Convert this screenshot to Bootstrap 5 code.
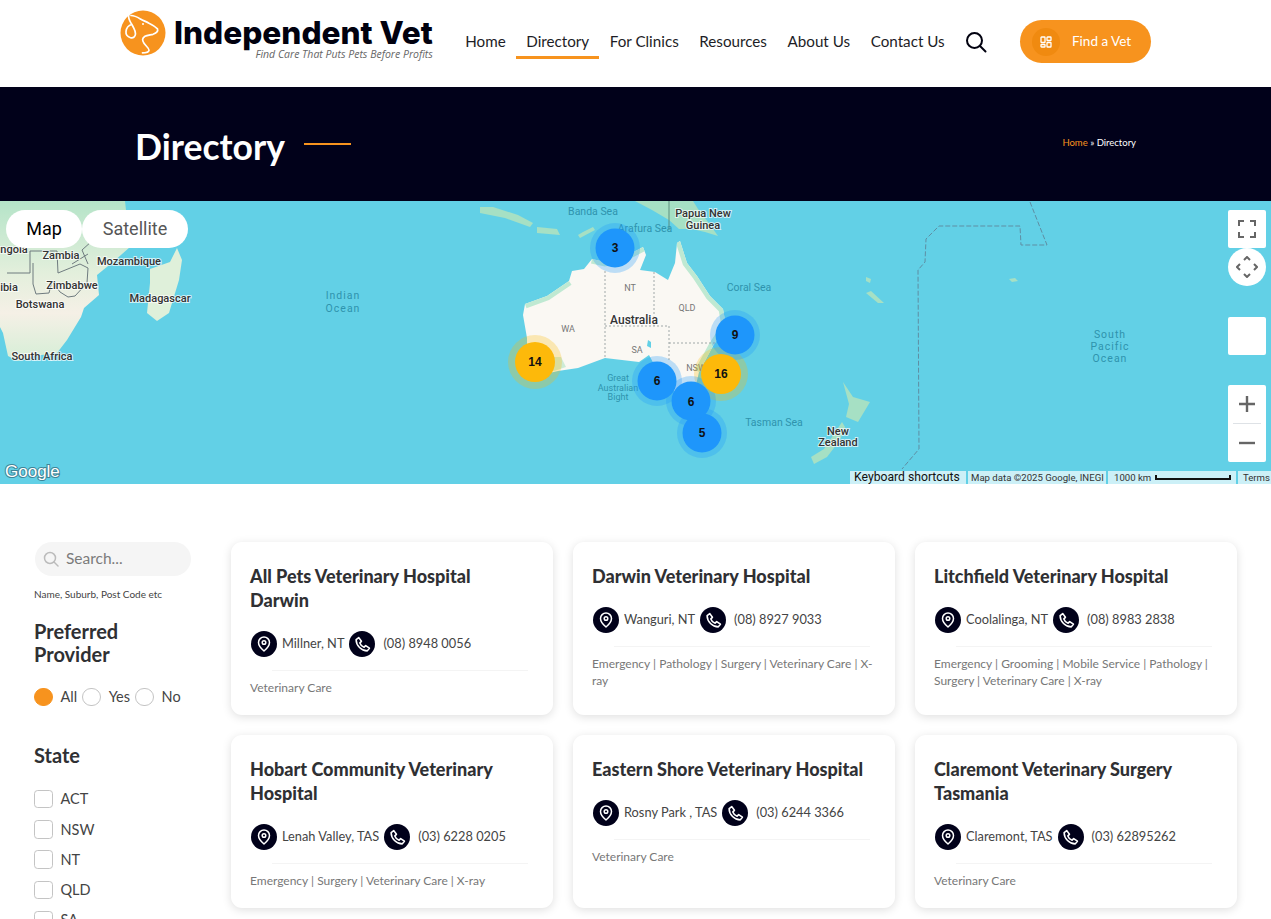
<!DOCTYPE html>
<html lang="en">
<head>
<meta charset="UTF-8">
<title>Directory - Independent Vet</title>
<link href="https://cdn.jsdelivr.net/npm/bootstrap@5.3.0/dist/css/bootstrap.min.css" rel="stylesheet">
<style>
html, body { height: 100vh; overflow: hidden; }
body { font-family: Lato, "Noto Sans", sans-serif; color: #2f3033; background: #fff; }

.site-head { height: 87px; }
.head-inner { width: 1031px; margin-left: 120px; }
.logo-box { padding-top: 10px; }
.logo-text { margin-left: 8px; padding-top: 8px; }
.logo-word { font-family: Inter, "Liberation Sans", sans-serif; font-weight: 800; font-size: 31.600px; line-height: 30px; color: #01010f; white-space: nowrap; }
.logo-tag { font-family: "Open Sans", sans-serif; font-style: italic; font-size: 10.500px; line-height: 12px; color: #666; text-align: right; white-space: nowrap; }
.main-nav { margin-left: 22px; }
.main-nav a { color: #1d1d26; text-decoration: none; font-size: 15.200px; padding: 0 10.300px; height: 59px; line-height: 82px; display: block; border-bottom: 3px solid transparent; white-space: nowrap; }
.main-nav a.on { border-bottom-color: #f7931e; }
.nav-search { margin: 30px 0 0 9px; }
.find-btn { width: 131px; height: 43px; margin-top: 20px; border-radius: 22px; background: #f7931e; color: #fff; font-size: 13.500px; padding-left: 12px; text-decoration: none; }
.find-dot { width: 28px; height: 28px; border-radius: 50%; background: #f08a10; margin-right: 12px; }

.page-band { height: 114px; background: #01011a; color: #fff; padding: 7px 135px 0; }
.page-band h1 { font-size: 35.500px; font-weight: 700; margin: 0; }
.band-line { width: 47px; height: 2px; background: #f7931e; margin-left: 19px; margin-bottom: 8px; }
.crumbs { font-size: 9.500px; margin-bottom: 8px; }
.crumbs span { color: #f7931e; }

.map-box { height: 283px; background: #62d0e6; overflow: hidden; }
.map-box svg { display: block; }
.map-pill { position: absolute; top: 9px; height: 38px; border-radius: 19px; background: #fff; font-family: Roboto, sans-serif; font-size: 18px; line-height: 38px; text-align: center; }
.pill-map { left: 6px; width: 76px; color: #000; }
.pill-sat { left: 82px; width: 106px; color: #565656; }
.map-ctrl { position: absolute; left: 1228px; width: 38px; background: #fff; border-radius: 2px; }
.ctrl-full { top: 9px; height: 38px; }
.ctrl-pan { top: 47px; height: 38px; border-radius: 50%; }
.ctrl-blank { top: 116px; height: 38px; }
.ctrl-zoom { top: 184px; height: 77px; }
.attrib { position: absolute; right: 0; bottom: 0; height: 13px; font-family: Roboto, sans-serif; font-size: 9.600px; line-height: 13px; color: #333; gap: 2px; }
.attrib > div { background: rgba(255,255,255,.68); padding: 0 3px; white-space: nowrap; }
.attrib .keys { width: 116px; font-size: 12.200px; color: #111; padding: 0 4px; }
.attrib .data-note { width: 138px; }
.attrib .scale-note { width: 128px; padding-left: 6px; }
.attrib .terms-note { width: 33px; padding-left: 5px; }
.scale-bar { width: 76px; height: 5px; border: 2px solid #111; border-top: 0; margin: 4px 0 0 4px; }

.list-area { padding: 58px 34px 0; gap: 40px; }
.side-col { width: 157px; flex: none; }
.search-pill { height: 34px; border-radius: 17px; background: #f5f5f5; padding: 0 8px; margin-left: 1px; }
.search-pill input { border: 0; background: transparent; outline: 0; width: 115px; font-size: 15.500px; color: #777; padding: 0; margin-left: 7px; }
.search-pill input::placeholder { color: #7b7b7b; opacity: 1; }
.hint-text { font-size: 10px; line-height: 12px; color: #444; margin: 12px 0 20px; }
.side-title { font-size: 20px; line-height: 23px; font-weight: 700; color: #2f3033; margin: 0; }
.radio-row { margin: 21px 0 37px; font-size: 14.500px; color: #444; height: 20px; }
.radio-row label { margin: 0 5px 0 8px; }
.side-col .form-check-input { width: 18.500px; height: 18.500px; margin: 0; border: 1.5px solid #c4c4c4; box-shadow: none; flex: none; }
.side-col .form-check-input:checked { background-color: #f7931e; border-color: #f7931e; background-image: none; }
.check-list { margin-top: 17px; }
.check-row { height: 30.300px; font-size: 14.500px; color: #444; }
.check-row label { margin-left: 8px; }

.card-grid { --bs-gutter-x: 20px; --bs-gutter-y: 20px; flex: 1; margin: -20px -10px 0; align-content: flex-start; }
.vet-card { height: 173px; border: 0; border-radius: 11px; box-shadow: 0 2px 10px rgba(0,0,0,.13); padding: 22px 19px 0; }
.vet-name { font-size: 18px; line-height: 24px; font-weight: 900; color: #2f3033; margin: 0 0 18px; padding-right: 8px; }
.vet-info { font-size: 12.800px; color: #444; height: 28px; white-space: nowrap; margin-bottom: 12px; }
.round-icon { width: 26px; height: 26px; border-radius: 50%; background: #01011a; flex: none; }
.pin-round { margin: 0 5px 0 1px; }
.phone-round { margin: 0 8px 0 5px; }
.vet-rule { height: 1px; background: #f4f4f4; margin: 0 6px 9px 22px; }
.vet-tags { font-size: 12px; line-height: 16.500px; color: #777; margin: 0; }
</style>
</head>
<body>

<header class="site-head bg-white">
  <div class="head-inner d-flex align-items-start">
    <div class="logo-box d-flex">
      <svg width="46" height="46" viewBox="0 0 46 46" fill="none" stroke="#fff" stroke-width="1.700" stroke-linecap="round" stroke-linejoin="round">
        <circle cx="23" cy="23" r="22.500" fill="#f7931e" stroke="none"/>
        <path d="M11 5.500c4 0 7 2 10 3.800 2 1.200 5 2.200 8 4 3 1.500 6 3 8.500 5.500 1 2.500-1.500 4.500-4.500 5.500-3 .7-6 .8-8 2-3 2-3 4-1 7 2 3 5 4.500 5 7-.5 2.500-4 2.500-6.500 2.500"/>
        <path d="M8.700 5.300c-1 3.500 2 7 4 10.700 1.500 3 3 5 2.800 8-.3 3-2.500 4.500-5 3.700-2.800-.8-4.800-3-4.500-6 .3-3.500 2.800-6.500 6-7.400"/>
        <circle cx="23" cy="14" r="1" fill="#fff" stroke="none"/>
      </svg>
      <div class="logo-text">
        <div class="logo-word">Independent Vet</div>
        <div class="logo-tag">Find Care That Puts Pets Before Profits</div>
      </div>
    </div>
    <nav class="main-nav d-flex">
      <a href="#">Home</a>
      <a href="#" class="on">Directory</a>
      <a href="#">For Clinics</a>
      <a href="#">Resources</a>
      <a href="#">About Us</a>
      <a href="#">Contact Us</a>
    </nav>
    <svg class="nav-search" width="24" height="24" viewBox="0 0 24 24" fill="none" stroke="#01010f" stroke-width="2" stroke-linecap="round">
      <circle cx="10.500" cy="10.500" r="7.500"/><path d="M16 16l5.500 5.500"/>
    </svg>
    <a href="#" class="find-btn d-flex align-items-center ms-auto">
      <span class="find-dot d-flex align-items-center justify-content-center">
        <svg width="12" height="12" viewBox="0 0 12 12" fill="none" stroke="#fff" stroke-width="1.300"><rect x="1" y="1" width="4" height="5.500" rx=".6"/><rect x="7" y="1" width="4" height="3.500" rx=".6"/><rect x="1" y="8.500" width="4" height="2.500" rx=".6"/><rect x="7" y="6.500" width="4" height="4.500" rx=".6"/></svg>
      </span>
      <span>Find a Vet</span>
    </a>
  </div>
</header>

<section class="page-band d-flex align-items-center">
  <h1>Directory</h1>
  <div class="band-line"></div>
  <div class="crumbs ms-auto"><span>Home</span> » Directory</div>
</section>

<section class="map-box position-relative">
  <svg width="1271" height="283" viewBox="0 0 1271 283">
    <defs>
      <filter id="soft"><feGaussianBlur stdDeviation=".7"/></filter>
      <linearGradient id="africaLand" x1="0" y1="0" x2="0" y2="1">
        <stop offset="0" stop-color="#b5e4c8"/><stop offset=".45" stop-color="#e3efdc"/><stop offset=".7" stop-color="#f5f0e6"/><stop offset="1" stop-color="#d5eed6"/>
      </linearGradient>
      <clipPath id="ausLand"><path d="M523 114l2-11 22-8 22-15 3-10 12-2 8-10 13 3 15-3 23-12 3 8-6 15 15 2 13 8 7-17 2-20 3-2 7 22 10 13 13 20 13 13 3 17-13 20-7 13-7 13-3 13-17 10-13-10-10-17-7-13-10 7-17-2-17-2-27 10-20 3-13 3-18-13v-23z"/></clipPath>
    </defs>
    <g filter="url(#soft)">
      <path d="M0 0H125l5 46-17 15-16 13 2 20-15 13-3 9-14 23-10 13-23 3-16 5-10-5-5-23-5-10H0z" fill="url(#africaLand)"/>
      <path d="M177 47l5 12-3 20-10 33-12 8-10-8 3-30v-14l20-7z" fill="#dff0da"/>
      <path d="M523 114l2-11 22-8 22-15 3-10 12-2 8-10 13 3 15-3 23-12 3 8-6 15 15 2 13 8 7-17 2-20 3-2 7 22 10 13 13 20 13 13 3 17-13 20-7 13-7 13-3 13-17 10-13-10-10-17-7-13-10 7-17-2-17-2-27 10-20 3-13 3-18-13v-23z" fill="#faf8f3"/>
      <g clip-path="url(#ausLand)" fill="none" stroke="#bfe9d2" stroke-width="9">
        <path d="M680 40l7 22 10 13 13 20 13 13 3 17-13 20-7 13-7 13"/>
        <path d="M569 80l-22 15-22 8M592 58l13 3 15-3 23-12"/>
      </g>
      <path d="M548 156l-6 12 12 2 12-4-5-10z" fill="#cdebd6"/>
      <g fill="#a6e0c4">
        <path d="M635 0l17 9 17 10 10 9 13 0 13 3 13 4-10-14-10-13-5-8z"/>
        <path d="M480 12l25 5 25 9 3-4-15-8-25-8-13 0zM537 26l20 2 3 6-23-2zM578 34l5-3 10-5 2 3-15 8z"/>
        <path d="M843 181l10 15 17 5-12 20-12-5 3-13zM842 221l-8 12-10 15-13 8 3 7 13-7 13-17 5-13z"/>
        <path d="M1009 78l6-1 3 3-6 1zM866 92l12 10 6 0-13-12zM866 76l5 2-1 4-4-2z"/>
      </g>
      <path d="M648 139l3 2v6l-4-2z" fill="#62d0e6"/>
    </g>
    <g fill="none" stroke="#6f7b7f" stroke-width="1">
      <path d="M30 50v22h-23M30 50h27l1 22 22-9 8 4-1 15-12 13-7 1-8-5-8-11-3 12-13 1-3-10v-21M88 63l-6-14 10-9 5-7M72 63l16-10"/>
      <path d="M669 0v29" stroke="#5d8e7e"/>
    </g>
    <g fill="none" stroke="#a0a8a8" stroke-width="1" stroke-dasharray="2 2">
      <path d="M605 70v87M605 125h64v35M654 71v54M669 142h50"/>
    </g>
    <path d="M1030 1l17 43h-26l-1-19h-81l-13 13-1 23-7 8 1 179-17 20" fill="none" stroke="#5e8ea3" stroke-width="1" stroke-dasharray="5 2"/>

    <g font-family="Roboto, sans-serif" font-size="10.500" text-anchor="middle" fill="#2f93ad">
      <text x="593" y="14">Banda Sea</text>
      <text x="645" y="31">Arafura Sea</text>
      <text x="749" y="90">Coral Sea</text>
      <text x="774" y="225">Tasman Sea</text>
      <g font-size="9">
        <text x="618" y="180">Great</text>
        <text x="618" y="189.500">Australian</text>
        <text x="618" y="199">Bight</text>
      </g>
      <g letter-spacing="1">
        <text x="343" y="98">Indian</text>
        <text x="343" y="111">Ocean</text>
        <text x="1110" y="137">South</text>
        <text x="1110" y="149">Pacific</text>
        <text x="1110" y="161">Ocean</text>
      </g>
    </g>
    <g font-family="Roboto, sans-serif" font-size="9" text-anchor="middle" fill="#777">
      <text x="630" y="90">NT</text>
      <text x="687" y="110">QLD</text>
      <text x="568" y="131">WA</text>
      <text x="637" y="152">SA</text>
      <text x="696" y="170">NSW</text>
    </g>
    <g font-family="Roboto, sans-serif" font-weight="500" font-size="11" text-anchor="middle" fill="#333" paint-order="stroke" stroke="#fff" stroke-width="2" stroke-opacity=".7">
      <text x="703" y="16">Papua New</text>
      <text x="703" y="28">Guinea</text>
      <text x="634" y="123" font-size="12">Australia</text>
      <text x="838" y="234">New</text>
      <text x="838" y="245">Zealand</text>
      <text x="61" y="58">Zambia</text>
      <text x="129" y="64">Mozambique</text>
      <text x="72" y="88">Zimbabwe</text>
      <text x="40" y="107">Botswana</text>
      <text x="160" y="101">Madagascar</text>
      <text x="42" y="159">South Africa</text>
      <text x="9" y="90">ibia</text>
      <text x="14" y="52">ngola</text>
    </g>

    <g font-family="Liberation Sans, sans-serif" font-weight="700" font-size="12" text-anchor="middle" fill="#111">
      <g fill="#fdba0a" fill-opacity=".28"><circle cx="535" cy="161" r="27"/><circle cx="721" cy="173" r="27"/></g>
      <g fill="#1e96fb" fill-opacity=".28"><circle cx="615" cy="47" r="25"/><circle cx="735" cy="134" r="25"/><circle cx="657" cy="180" r="25"/><circle cx="691" cy="200" r="25"/><circle cx="702" cy="232" r="25"/></g>
      <circle cx="615" cy="47" r="19.500" fill="#1e96fb"/><text x="615" y="51">3</text>
      <circle cx="535" cy="161" r="20" fill="#fdb90a"/><text x="535" y="165">14</text>
      <circle cx="735" cy="134" r="19.500" fill="#1e96fb"/><text x="735" y="138">9</text>
      <circle cx="721" cy="173" r="20" fill="#fdb90a"/><text x="721" y="177">16</text>
      <circle cx="657" cy="180" r="19.500" fill="#1e96fb"/><text x="657" y="184">6</text>
      <circle cx="702" cy="232" r="19.500" fill="#1e96fb"/><text x="702" y="236">5</text>
      <circle cx="691" cy="200" r="19.500" fill="#1e96fb"/><text x="691" y="205">6</text>
    </g>
    <text x="5" y="276" font-family="Liberation Sans, sans-serif" font-size="17" fill="#fff" stroke="#3f8496" stroke-width="2" paint-order="stroke">Google</text>
  </svg>

  <div class="map-pill pill-map">Map</div>
  <div class="map-pill pill-sat">Satellite</div>

  <div class="map-ctrl ctrl-full d-flex align-items-center justify-content-center">
    <svg width="18" height="18" viewBox="0 0 18 18" fill="none" stroke="#666" stroke-width="2"><path d="M1 6V1h5M12 1h5v5M17 12v5h-5M6 17H1v-5"/></svg>
  </div>
  <div class="map-ctrl ctrl-pan d-flex align-items-center justify-content-center">
    <svg width="22" height="22" viewBox="0 0 22 22" fill="none" stroke="#666" stroke-width="2"><path d="M8 4l3-3 3 3M8 18l3 3 3-3M4 8l-3 3 3 3M18 8l3 3-3 3"/></svg>
  </div>
  <div class="map-ctrl ctrl-blank"></div>
  <div class="map-ctrl ctrl-zoom d-flex flex-column align-items-center">
    <svg width="38" height="38" viewBox="0 0 38 38" stroke="#666" stroke-width="2.400"><path d="M11 19h16M19 11v16"/></svg>
    <div class="w-75 border-top"></div>
    <svg width="38" height="38" viewBox="0 0 38 38" stroke="#666" stroke-width="2.400"><path d="M11 19h16"/></svg>
  </div>

  <div class="attrib d-flex">
    <div class="keys">Keyboard shortcuts</div>
    <div class="data-note">Map data ©2025 Google, INEGI</div>
    <div class="scale-note d-flex align-items-start">1000 km<span class="scale-bar"></span></div>
    <div class="terms-note">Terms</div>
  </div>
</section>

<main class="list-area d-flex align-items-start">
  <aside class="side-col">
    <div class="search-pill d-flex align-items-center">
      <svg width="16" height="16" viewBox="0 0 16 16" fill="none" stroke="#bbb" stroke-width="1.500" stroke-linecap="round"><circle cx="7" cy="7" r="5.500"/><path d="M11 11l4 4"/></svg>
      <input type="text" placeholder="Search...">
    </div>
    <p class="hint-text">Name, Suburb, Post Code etc</p>
    <h2 class="side-title">Preferred Provider</h2>
    <div class="radio-row d-flex align-items-center">
      <input class="form-check-input" type="radio" name="pref" id="prefAll" checked><label for="prefAll">All</label>
      <input class="form-check-input" type="radio" name="pref" id="prefYes"><label for="prefYes">Yes</label>
      <input class="form-check-input" type="radio" name="pref" id="prefNo"><label for="prefNo">No</label>
    </div>
    <h2 class="side-title">State</h2>
    <div class="check-list">
      <div class="check-row d-flex align-items-center"><input class="form-check-input" type="checkbox" id="sAct"><label for="sAct">ACT</label></div>
      <div class="check-row d-flex align-items-center"><input class="form-check-input" type="checkbox" id="sNsw"><label for="sNsw">NSW</label></div>
      <div class="check-row d-flex align-items-center"><input class="form-check-input" type="checkbox" id="sNt"><label for="sNt">NT</label></div>
      <div class="check-row d-flex align-items-center"><input class="form-check-input" type="checkbox" id="sQld"><label for="sQld">QLD</label></div>
      <div class="check-row d-flex align-items-center"><input class="form-check-input" type="checkbox" id="sSa"><label for="sSa">SA</label></div>
    </div>
  </aside>

  <div id="cards" class="row row-cols-3 card-grid"></div>
</main>

<script>
  const pinIcon = `<svg width="16" height="16" viewBox="0 0 16 16" fill="none" stroke="#fff" stroke-width="1.500" stroke-linejoin="round"><path d="M8 15C5 12.500 2.500 10 2.500 6.500a5.500 5.500 0 0 1 11 0C13.500 10 11 12.500 8 15z"/><circle cx="8" cy="6.500" r="1.800"/></svg>`;
  const phoneIcon = `<svg width="17" height="17" viewBox="0 0 16 16" fill="none" stroke="#fff" stroke-width="1.500" stroke-linejoin="round"><path d="M2 3.500L4.500 1.500l2.500 3.500-1.500 1.500c.5 1.500 2.500 3.500 4 4L11 9l3.500 2.500-2 2.500C7 14 2 9 2 3.500z"/></svg>`;

  const vets = [
    {name: "All Pets Veterinary Hospital Darwin", place: "Millner, NT", phone: "(08) 8948 0056", tags: "Veterinary Care"},
    {name: "Darwin Veterinary Hospital", place: "Wanguri, NT", phone: "(08) 8927 9033", tags: "Emergency | Pathology | Surgery | Veterinary Care | X-ray"},
    {name: "Litchfield Veterinary Hospital", place: "Coolalinga, NT", phone: "(08) 8983 2838", tags: "Emergency | Grooming | Mobile Service | Pathology | Surgery | Veterinary Care | X-ray"},
    {name: "Hobart Community Veterinary Hospital", place: "Lenah Valley, TAS", phone: "(03) 6228 0205", tags: "Emergency | Surgery | Veterinary Care | X-ray"},
    {name: "Eastern Shore Veterinary Hospital", place: "Rosny Park , TAS", phone: "(03) 6244 3366", tags: "Veterinary Care"},
    {name: "Claremont Veterinary Surgery Tasmania", place: "Claremont, TAS", phone: "(03) 62895262", tags: "Veterinary Care"}
  ];

  document.getElementById("cards").innerHTML = vets.map(v => `
    <div class="col">
      <div class="card vet-card">
        <h3 class="vet-name">${v.name}</h3>
        <div class="vet-info d-flex align-items-center">
          <span class="round-icon pin-round d-flex align-items-center justify-content-center">${pinIcon}</span>
          <span>${v.place}</span>
          <span class="round-icon phone-round d-flex align-items-center justify-content-center">${phoneIcon}</span>
          <span>${v.phone}</span>
        </div>
        <div class="vet-rule"></div>
        <p class="vet-tags">${v.tags}</p>
      </div>
    </div>`).join("");
</script>
<script src="https://cdn.jsdelivr.net/npm/bootstrap@5.3.0/dist/js/bootstrap.bundle.min.js"></script>
</body>
</html>
